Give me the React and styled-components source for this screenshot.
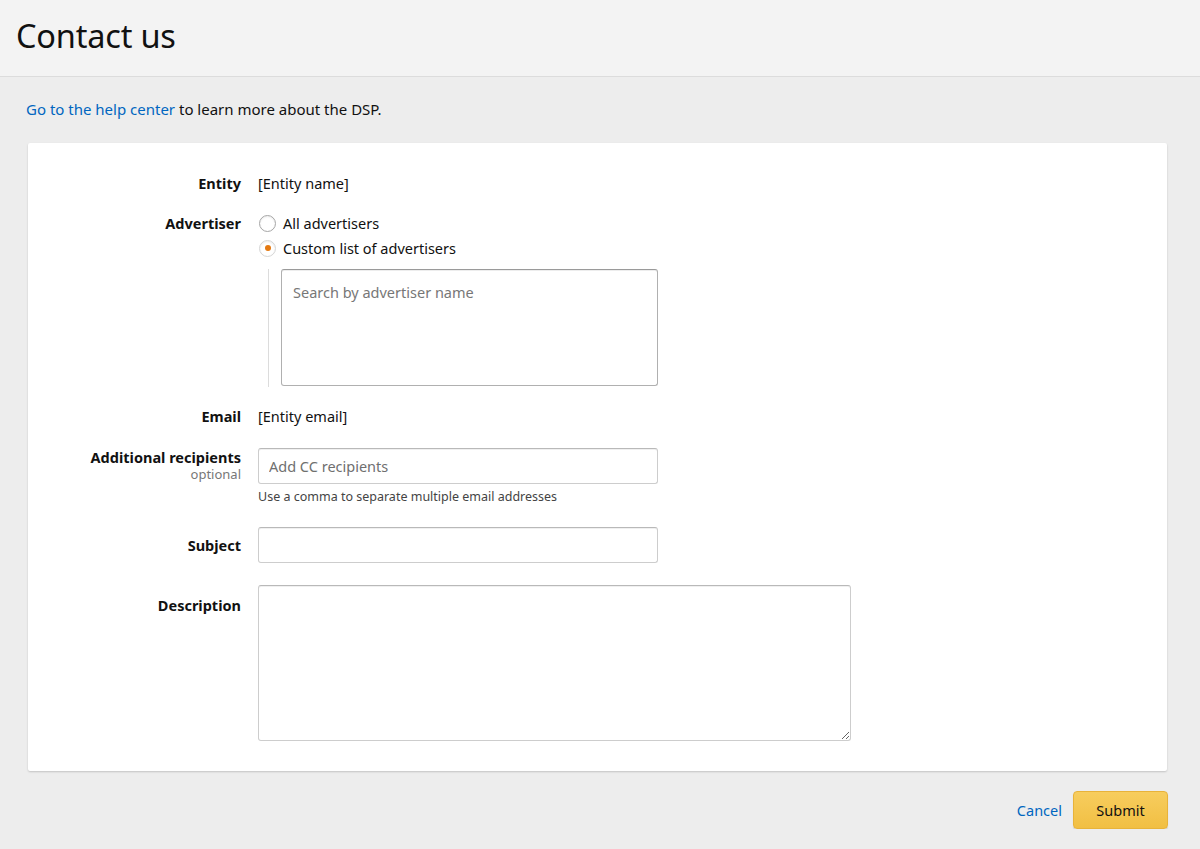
import React from 'react';
import styled, { createGlobalStyle } from 'styled-components';

const GlobalStyle = createGlobalStyle`
  html, body {
    margin: 0;
    padding: 0;
    background: #ededed;
    font-family: "Noto Sans", "Open Sans", Arial, sans-serif;
    color: #111;
  }
  * { box-sizing: border-box; }
`;

const Header = styled.header`
  height: 77px;
  background: #f3f3f3;
  border-bottom: 1px solid #dcdcdc;
  padding: 13px 16px 0;
`;

const Title = styled.h1`
  margin: 0;
  font-size: 32.5px;
  font-weight: 400;
  letter-spacing: -0.2px;
  color: #111;
`;

const Main = styled.main`
  padding: 23px 33px 0 28px;
`;

const Intro = styled.p`
  margin: 0 0 25px -2px;
  font-size: 15px;
  line-height: 18px;
  color: #111;
`;

const HelpLink = styled.a`
  color: #0066c0;
  text-decoration: none;
`;

const Card = styled.section`
  background: #fff;
  border-radius: 2px;
  box-shadow: 0 1px 2px rgba(0, 0, 0, 0.18);
  padding: 31px 0 30px;
  display: flex;
  flex-direction: column;
`;

const Row = styled.div`
  display: grid;
  grid-template-columns: 213px 1fr;
  column-gap: 17px;
  align-items: ${p => (p.$center ? 'center' : 'start')};
  margin-bottom: ${p => p.$gap}px;
`;

const Label = styled.div`
  text-align: right;
  font-size: 14.5px;
  font-weight: 700;
  line-height: 18px;
  padding-top: ${p => p.$top || 0}px;
  color: #111;
`;

const Optional = styled.div`
  font-weight: 400;
  font-size: 13px;
  color: #777;
  line-height: 17px;
`;

const Value = styled.div`
  font-size: 14.5px;
  line-height: 18px;
  color: #111;
`;

const RadioList = styled.div`
  display: flex;
  flex-direction: column;
  gap: 7px;
`;

const RadioRow = styled.label`
  display: flex;
  align-items: center;
  gap: 7px;
  font-size: 14.5px;
  line-height: 18px;
  margin-left: 1px;
`;

const RadioDot = styled.span`
  width: 17px;
  height: 17px;
  border-radius: 50%;
  border: 1px solid ${p => (p.$checked ? '#d5d5d5' : '#a6a6a6')};
  background: #fff;
  box-shadow: inset 0 1px 2px rgba(0, 0, 0, 0.08);
  display: flex;
  align-items: center;
  justify-content: center;
  &::after {
    content: '';
    width: 6px;
    height: 6px;
    border-radius: 50%;
    background: ${p => (p.$checked ? '#e47911' : 'transparent')};
  }
`;

const Nested = styled.div`
  margin: 12px 0 0 10px;
  padding-left: 12px;
  border-left: 1px solid #dcdcdc;
  height: 118px;
`;

const SearchBox = styled.div`
  width: 377px;
  height: 117px;
  border: 1px solid #b0b0b0;
  border-top-color: #9a9a9a;
  border-radius: 3px;
  box-shadow: inset 0 1px 0 rgba(0, 0, 0, 0.07);
  padding: 12px 11px;
  font-size: 14.5px;
  color: #777;
`;

const Input = styled.input`
  display: block;
  width: ${p => p.$w || 400}px;
  height: 36px;
  border: 1px solid #cdcdcd;
  border-top-color: #b9b9b9;
  border-radius: 3px;
  box-shadow: inset 0 1px 0 rgba(0, 0, 0, 0.06);
  padding: 0 10px;
  font-family: inherit;
  font-size: 14.5px;
  color: #111;
  outline: none;
  &::placeholder { color: #6f6f6f; }
`;

const TextArea = styled.textarea`
  display: block;
  width: 593px;
  height: 156px;
  border: 1px solid #cdcdcd;
  border-top-color: #b9b9b9;
  border-radius: 3px;
  box-shadow: inset 0 1px 0 rgba(0, 0, 0, 0.06);
  padding: 8px 10px;
  font-family: inherit;
  font-size: 14.5px;
  outline: none;
`;

const Hint = styled.div`
  margin-top: 5px;
  font-size: 12.5px;
  line-height: 16px;
  color: #444;
`;

const Footer = styled.div`
  display: flex;
  justify-content: flex-end;
  align-items: center;
  gap: 11px;
  padding: 20px 0 0;
`;

const CancelLink = styled.a`
  color: #0066c0;
  font-size: 14.5px;
  text-decoration: none;
`;

const SubmitButton = styled.button`
  width: 95px;
  height: 38px;
  border: 1px solid #e8b33a;
  border-radius: 4px;
  background: linear-gradient(#f7cd5e, #f1bf43);
  box-shadow: 0 1px 1px rgba(0, 0, 0, 0.15);
  font-family: inherit;
  font-size: 14.5px;
  color: #111;
  margin-right: -1px;
`;

export default function App() {
  return (
    <>
      <GlobalStyle />
      <Header>
        <Title>Contact us</Title>
      </Header>
      <Main>
        <Intro>
          <HelpLink href="#">Go to the help center</HelpLink> to learn more about the DSP.
        </Intro>
        <Card>
          <Row $gap={22}>
            <Label>Entity</Label>
            <Value>[Entity name]</Value>
          </Row>
          <Row $gap={20}>
            <Label>Advertiser</Label>
            <div>
              <RadioList>
                <RadioRow><RadioDot />All advertisers</RadioRow>
                <RadioRow><RadioDot $checked />Custom list of advertisers</RadioRow>
              </RadioList>
              <Nested>
                <SearchBox>Search by advertiser name</SearchBox>
              </Nested>
            </div>
          </Row>
          <Row $gap={23}>
            <Label>Email</Label>
            <Value>[Entity email]</Value>
          </Row>
          <Row $gap={22}>
            <Label>
              Additional recipients
              <Optional>optional</Optional>
            </Label>
            <div>
              <Input placeholder="Add CC recipients" />
              <Hint>Use a comma to separate multiple email addresses</Hint>
            </div>
          </Row>
          <Row $gap={22} $center>
            <Label>Subject</Label>
            <Input />
          </Row>
          <Row $gap={0}>
            <Label $top={11}>Description</Label>
            <TextArea />
          </Row>
        </Card>
        <Footer>
          <CancelLink href="#">Cancel</CancelLink>
          <SubmitButton>Submit</SubmitButton>
        </Footer>
      </Main>
    </>
  );
}
